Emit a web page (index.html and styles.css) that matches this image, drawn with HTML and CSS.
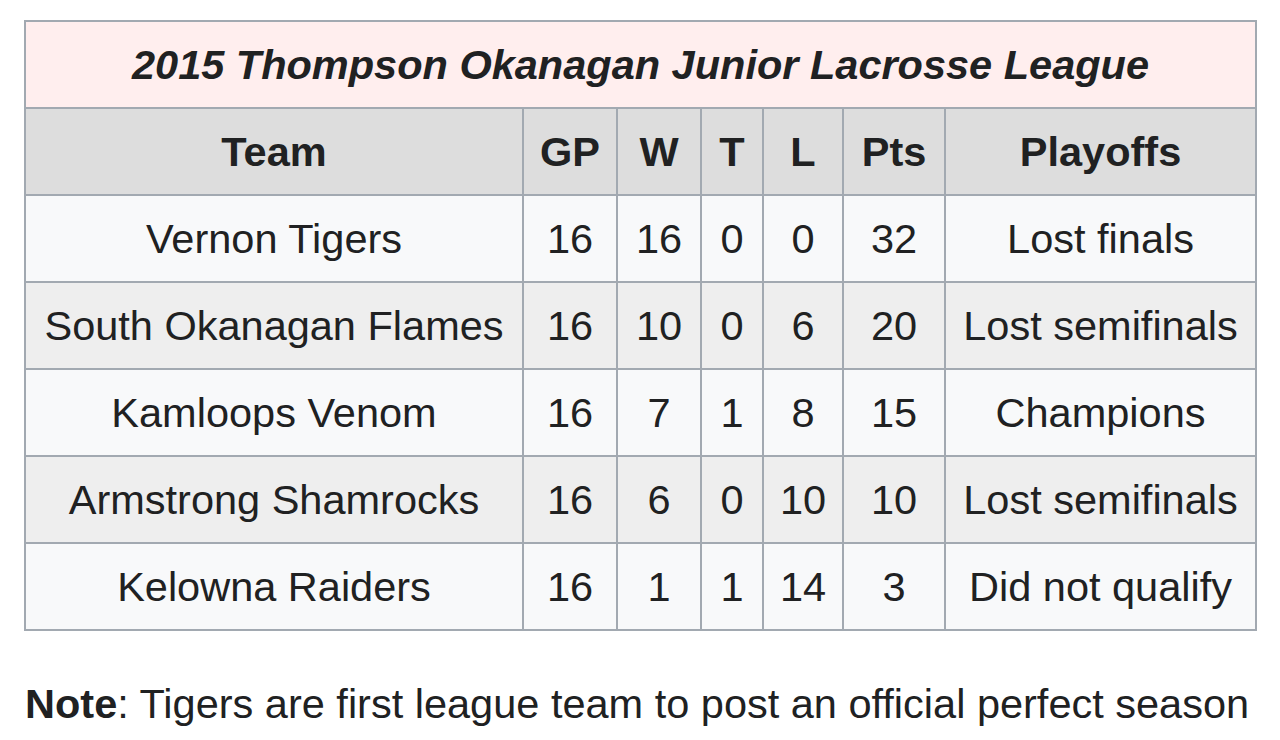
FILE: index.html
```html
<!DOCTYPE html>
<html>
<head>
<meta charset="utf-8">
<link rel="stylesheet" href="styles.css">
</head>
<body>
<table class="standings">
  <colgroup>
    <col class="c-team"><col class="c-gp"><col class="c-w"><col class="c-t"><col class="c-l"><col class="c-pts"><col class="c-po">
  </colgroup>
  <tr class="title-row"><th colspan="7">2015 Thompson Okanagan Junior Lacrosse League</th></tr>
  <tr class="head-row"><th>Team</th><th>GP</th><th>W</th><th>T</th><th>L</th><th>Pts</th><th>Playoffs</th></tr>
  <tr><td>Vernon Tigers</td><td>16</td><td>16</td><td>0</td><td>0</td><td>32</td><td>Lost finals</td></tr>
  <tr><td>South Okanagan Flames</td><td>16</td><td>10</td><td>0</td><td>6</td><td>20</td><td>Lost semifinals</td></tr>
  <tr><td>Kamloops Venom</td><td>16</td><td>7</td><td>1</td><td>8</td><td>15</td><td>Champions</td></tr>
  <tr><td>Armstrong Shamrocks</td><td>16</td><td>6</td><td>0</td><td>10</td><td>10</td><td>Lost semifinals</td></tr>
  <tr><td>Kelowna Raiders</td><td>16</td><td>1</td><td>1</td><td>14</td><td>3</td><td>Did not qualify</td></tr>
</table>
<p class="note"><b>Note</b>: Tigers are first league team to post an official perfect season</p>
</body>
</html>
```
FILE: styles.css
```css
html, body {
  margin: 0;
  padding: 0;
  background: #ffffff;
}
body {
  font-family: "Liberation Sans", Arial, sans-serif;
  color: #202122;
  padding: 20px 0 0 24px;
}
.standings {
  border-collapse: collapse;
  table-layout: fixed;
  width: 1233px;
  font-size: 41.5px;
  background: #f8f9fa;
  border: 2px solid #a2a9b1;
}
.c-team { width: 498px; }
.c-gp { width: 94px; }
.c-w { width: 84px; }
.c-t { width: 62px; }
.c-l { width: 80px; }
.c-pts { width: 102px; }
.c-po { width: 311px; }
.standings th, .standings td {
  border: 2px solid #a2a9b1;
  text-align: center;
  padding: 0;
  white-space: nowrap;
  height: 85px;
}
.title-row th {
  background: #ffeeee;
  font-style: italic;
}
.head-row th {
  background: #dddddd;
}
.standings tr:nth-child(odd) td { background: #f8f9fa; }
.standings tr:nth-child(even) td { background: #eeeeee; }
.note {
  margin: 49px 0 0 1px;
  font-size: 41.5px;
}
```
